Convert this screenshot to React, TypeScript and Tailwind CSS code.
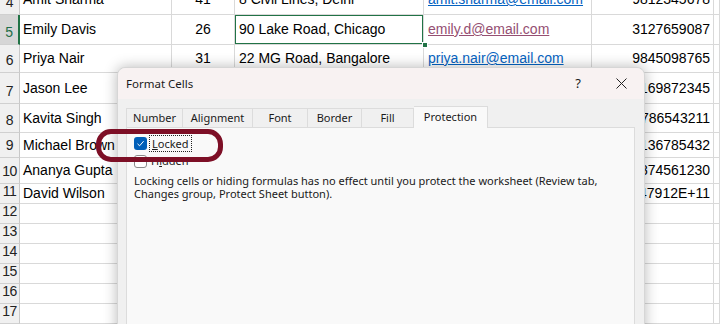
import React from 'react';

type Row = {
    n: number;
    h: string;
    name: string;
    age: string;
    addr: string;
    email: string;
    phone: string;
    visited?: boolean;
};

// rows 7-11 are mostly under the dialog, only the name and the phone peek out
const rows: Row[] = [
    { n: 4, h: 'h-[30px] -mt-[15px]', name: 'Amit Sharma', age: '41', addr: '8 Civil Lines, Delhi', email: 'amit.sharma@email.com', phone: '9812345678' },
    { n: 5, h: 'h-[30px]', name: 'Emily Davis', age: '26', addr: '90 Lake Road, Chicago', email: 'emily.d@email.com', phone: '3127659087', visited: true },
    { n: 6, h: 'h-[28px]', name: 'Priya Nair', age: '31', addr: '22 MG Road, Bangalore', email: 'priya.nair@email.com', phone: '9845098765' },
    { n: 7, h: 'h-[31px]', name: 'Jason Lee', age: '', addr: '', email: '', phone: '4169872345' },
    { n: 8, h: 'h-[29px]', name: 'Kavita Singh', age: '', addr: '', email: '', phone: '9786543211' },
    { n: 9, h: 'h-[25px]', name: 'Michael Brown', age: '', addr: '', email: '', phone: '2136785432' },
    { n: 10, h: 'h-[26px]', name: 'Ananya Gupta', age: '', addr: '', email: '', phone: '9874561230' },
    { n: 11, h: 'h-[20px]', name: 'David Wilson', age: '', addr: '', email: '', phone: '1.47912E+11' },
];

const empty = [12, 13, 14, 15, 16, 17];

const cell = 'border-r border-b border-[#d9d9d9] flex items-center overflow-hidden whitespace-nowrap';
const head = 'w-[20px] shrink-0 flex items-end justify-center pb-[1px] border-b border-[#d0d0d0] text-[14px] tracking-[-0.5px]';

function SheetRow({ r }: { r: Row }) {
    const sel = r.n === 5;
    return (
        <div className={`flex ${r.h}`}>
            <div
                className={`${head} ${
                    sel ? 'bg-[#d6d6d6] text-[#1e6e48] border-r-2 border-r-[#217346]' : 'bg-[#f0f0f0] text-[#222] border-r border-r-[#c8c8c8]'
                }`}
            >
                {r.n}
            </div>
            <div className={`${cell} w-[152px] pl-[3px]`}>{r.name}</div>
            <div className={`${cell} w-[63px] justify-center`}>{r.age}</div>
            <div className={`${cell} w-[189px] pl-[4px] relative`}>
                {r.addr}
                {sel && <div className="absolute inset-[-1px] border-2 border-[#217346]" />}
            </div>
            <div className={`${cell} w-[168px] pl-[4px]`}>
                <span className={`underline ${r.visited ? 'text-[#954f72]' : 'text-[#0563c1]'}`}>{r.email}</span>
            </div>
            <div className={`${cell} w-[122px] justify-end pr-[3px]`}>{r.phone}</div>
            <div className={`${cell} flex-1`} />
        </div>
    );
}

function Check({ on }: { on: boolean }) {
    return on ? (
        <span className="w-[13px] h-[13px] rounded-[3px] bg-[#005fb8] flex items-center justify-center shrink-0">
            <svg width="9" height="9" viewBox="0 0 9 9">
                <path d="M1.5 4.8 L3.6 6.8 L7.6 2.2" fill="none" stroke="white" strokeWidth="1" />
            </svg>
        </span>
    ) : (
        <span className="w-[13px] h-[13px] rounded-[3px] bg-white border border-[#8a8a8a] shrink-0" />
    );
}

const tabs = [
    { label: 'Number', w: 'w-[57px]' },
    { label: 'Alignment', w: 'w-[70px]' },
    { label: 'Font', w: 'w-[55px]' },
    { label: 'Border', w: 'w-[54px]' },
    { label: 'Fill', w: 'w-[52px]' },
];

export default function App() {
    return (
        <div className="relative w-[720px] h-[324px] overflow-hidden bg-white text-[14px] text-black font-['Liberation_Sans',sans-serif]">
            {rows.map(r => (
                <SheetRow key={r.n} r={r} />
            ))}
            {empty.map(n => (
                <div key={n} className="flex h-[20px]">
                    <div className={`${head} bg-[#f0f0f0] border-r border-r-[#c8c8c8] text-[#222]`}>{n}</div>
                    <div className={`${cell} w-[152px]`} />
                    <div className={`${cell} w-[63px]`} />
                    <div className={`${cell} w-[189px]`} />
                    <div className={`${cell} w-[168px]`} />
                    <div className={`${cell} w-[122px]`} />
                    <div className={`${cell} flex-1`} />
                </div>
            ))}

            {/* fill handle of the selected cell */}
            <div className="absolute left-[422px] top-[42px] w-[6px] h-[6px] bg-[#217346] border border-white" />

            {/* Format Cells dialog */}
            <div className="absolute left-[117px] top-[67px] w-[528px] h-[280px] rounded-t-[8px] bg-[#f0f0f0] border border-[#d6d6d6] shadow-[0_0_14px_rgba(0,0,0,0.28)] font-['Noto_Sans',sans-serif] text-[11px] text-[#1a1a1a]">
                <div className="h-[31px] rounded-t-[8px] bg-[#f8f2f2] flex items-center pl-[8px]">
                    <span className="flex-1 text-[11.5px]">Format Cells</span>
                    <span className="w-[20px] text-center text-[13px] mr-[28px]">?</span>
                    <svg width="11" height="11" viewBox="0 0 11 11" className="mr-[17px]">
                        <path d="M0.5 0.5 L10.5 10.5 M10.5 0.5 L0.5 10.5" stroke="#222" strokeWidth="1" />
                    </svg>
                </div>
                <div className="px-[8px] pt-[8px]">
                    <div className="flex items-end h-[20px]">
                        {tabs.map(t => (
                            <div
                                key={t.label}
                                className={`${t.w} h-[19px] flex items-center justify-center border-t border-r border-[#dcdcdc] first:border-l bg-[#f0f0f0]`}
                            >
                                {t.label}
                            </div>
                        ))}
                        <div className="w-[74px] h-[22px] flex items-center justify-center bg-[#f9f9f9] border-t border-r border-[#dcdcdc] relative top-[1px]">
                            Protection
                        </div>
                    </div>
                    <div className="h-[240px] bg-[#f9f9f9] border border-[#dcdcdc] mr-[1px] pl-[7px] pt-[8px]">
                        <div className="flex items-center gap-[2px] h-[15px]">
                            <Check on />
                            <span className="border border-dotted border-[#222] px-[2px] leading-[15px]">
                                <span className="underline">L</span>ocked
                            </span>
                        </div>
                        <div className="flex items-center gap-[4px] h-[15px] mt-[3px]">
                            <Check on={false} />
                            <span>
                                H<span className="underline">i</span>dden
                            </span>
                        </div>
                        <p className="mt-[5px] leading-[13px]">
                            Locking cells or hiding formulas has no effect until you protect the worksheet (Review tab,
                            <br />
                            Changes group, Protect Sheet button).
                        </p>
                    </div>
                </div>
            </div>

            {/* annotation ring */}
            <div className="absolute left-[96px] top-[129px] w-[127px] h-[33px] rounded-[15px] border-[5px] border-[#7d0f26]" />
        </div>
    );
}
